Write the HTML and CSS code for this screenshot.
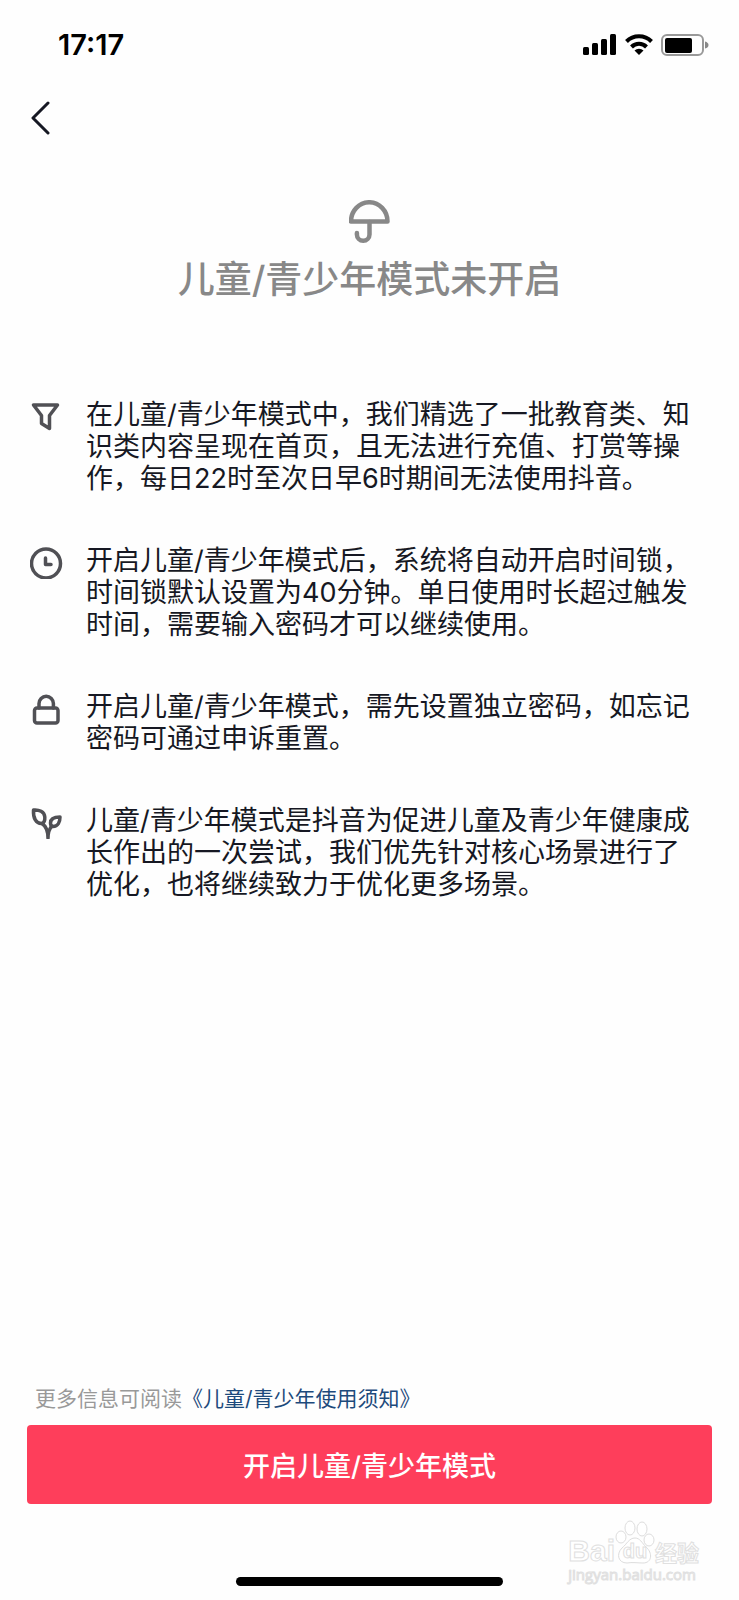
FILE: index.html
```
<!DOCTYPE html>
<html lang="zh-CN">
<head>
  <meta charset="UTF-8">
  <meta name="viewport" content="width=device-width, initial-scale=1.0">
  <title>儿童/青少年模式</title>
  <link rel="stylesheet" href="styles.css">
</head>
<body>
  <div class="screen">
    <div class="status-bar">
      <span class="time">17:17</span>
      <div class="status-icons">
        <svg width="34" height="22" viewBox="0 0 34 22">
          <rect x="0" y="13" width="6" height="8" rx="1.5"/>
          <rect x="9" y="9" width="6" height="12" rx="1.5"/>
          <rect x="18" y="5" width="6" height="16" rx="1.5"/>
          <rect x="27" y="0" width="6" height="21" rx="1.5"/>
        </svg>
        <svg width="28" height="22" viewBox="0 0 28 22">
          <path d="M1.5 7.5a17.500 17.500 0 0 1 25 0" fill="none" stroke="#000" stroke-width="4"/>
          <path d="M6.500 13a10.500 10.500 0 0 1 15 0" fill="none" stroke="#000" stroke-width="4"/>
          <path d="M14 21l-4.500-4.500a6.500 6.500 0 0 1 9 0z"/>
        </svg>
        <svg width="48" height="22" viewBox="0 0 48 22">
          <rect x="1" y="1" width="41" height="20" rx="5" fill="none" stroke="#999" stroke-width="2"/>
          <rect x="4" y="4" width="27" height="15" rx="2"/>
          <path d="M44 7.500q3.500 1 3.500 3.500t-3.500 3.500z" fill="#888"/>
        </svg>
      </div>
    </div>

    <button class="back" aria-label="返回">
      <svg width="20" height="34" viewBox="0 0 20 34">
        <path d="M18 2L3 17l15 15" fill="none" stroke="#161823" stroke-width="3" stroke-linecap="round" stroke-linejoin="round"/>
      </svg>
    </button>

    <div class="hero">
      <svg width="42" height="44" viewBox="0 0 42 44" fill="none" stroke="#888" stroke-width="4.500" stroke-linecap="round" stroke-linejoin="round">
        <path d="M2 21.500a18 19 0 0 1 36.500 0z"/>
        <path d="M20.500 22v12.500a6.300 6.300 0 0 1-12.600 0v-1.500"/>
      </svg>
      <h1>儿童/青少年模式未开启</h1>
    </div>

    <ul class="features">
      <li>
        <svg width="34" height="34" viewBox="0 0 34 34">
          <path d="M3.500 6h24l-8 10.500v13l-8-5v-8z"/>
        </svg>
        <p>在儿童/青少年模式中，我们精选了一批教育类、知识类内容呈现在首页，且无法进行充值、打赏等操作，每日22时至次日早6时期间无法使用抖音。</p>
      </li>
      <li>
        <svg width="34" height="34" viewBox="0 0 34 34">
          <circle cx="16" cy="18.500" r="14.500"/>
          <path d="M15.500 13v6.500h5.500"/>
        </svg>
        <p>开启儿童/青少年模式后，系统将自动开启时间锁，时间锁默认设置为40分钟。单日使用时长超过触发时间，需要输入密码才可以继续使用。</p>
      </li>
      <li>
        <svg width="34" height="34" viewBox="0 0 34 34">
          <rect x="4.500" y="17" width="23.500" height="15" rx="2.500"/>
          <path d="M9 17v-4.500a7.200 7.200 0 0 1 14.400 0v4.500"/>
        </svg>
        <p>开启儿童/青少年模式，需先设置独立密码，如忘记密码可通过申诉重置。</p>
      </li>
      <li>
        <svg width="34" height="34" viewBox="0 0 34 34">
          <path d="M3.500 5C9 4.500 14.500 6.500 14.800 12c.2 3-.8 5.800-2.800 6.500C6 19 3 13 3.500 5z"/>
          <path d="M30 12c-5.500 0-9.500 2-9.500 6 0 2 1 3.500 2.500 3.500 5 0 7-4.500 7-9.500z"/>
          <path d="M12 18.500c3 2 6 6 6 14.500 0-6 1-9 4-12"/>
        </svg>
        <p>儿童/青少年模式是抖音为促进儿童及青少年健康成长作出的一次尝试，我们优先针对核心场景进行了优化，也将继续致力于优化更多场景。</p>
      </li>
    </ul>

    <div class="footer">
      <p class="notice">更多信息可阅读<a href="#">《儿童/青少年使用须知》</a></p>
      <button class="enable">开启儿童/青少年模式</button>
    </div>

    <div class="home-indicator"></div>

    <div class="watermark">
      <div class="wm-logo">
        <span>Bai</span>
        <span class="paw">
          <svg width="40" height="44" viewBox="0 0 40 44" fill="#fff" stroke="#ddd">
            <ellipse cx="6" cy="17" rx="5" ry="6"/>
            <ellipse cx="15" cy="8" rx="5" ry="7"/>
            <ellipse cx="27" cy="9" rx="5" ry="7"/>
            <ellipse cx="34" cy="20" rx="5" ry="6"/>
            <path d="M20 18c5 0 7 5 11 9 7 6 6 16-3 16-5 0-11-1-16 0-9 0-11-9-5-15 5-4 7-10 13-10z"/>
          </svg>
          <span class="du">du</span>
        </span>
        <span class="cn">经验</span>
      </div>
      <div class="wm-url">jingyan.baidu.com</div>
    </div>
  </div>
</body>
</html>
```
FILE: styles.css
```
* {
  box-sizing: border-box;
}
body {
  margin: 0;
  background: #fefefe;
  color: #161823;
  font-family: Inter, "Noto Sans CJK SC", sans-serif;
}
h1, p, ul {
  margin: 0;
  padding: 0;
}
button {
  border: 0;
  font-family: inherit;
  cursor: pointer;
}
svg {
  display: block;
  flex-shrink: 0;
}
.screen {
  position: relative;
  display: flex;
  flex-direction: column;
  min-height: 100vh;
}
.status-bar {
  display: flex;
  justify-content: space-between;
  align-items: center;
  height: 89px;
  padding: 0 30px 0 58px;
}
.time {
  color: #000;
  font-size: 29px;
  font-weight: 600;
}
.status-icons {
  display: flex;
  gap: 8px;
}
.back {
  align-self: flex-start;
  margin-top: 12px;
  padding: 0 30px;
  background: none;
}
.hero {
  display: flex;
  flex-direction: column;
  align-items: center;
  margin-top: 65px;
}
.hero h1 {
  margin-top: 8px;
  color: #888;
  font-size: 37px;
  font-weight: 500;
  line-height: 56px;
}
.features {
  display: flex;
  flex-direction: column;
  gap: 50px;
  margin-top: 91px;
  padding: 0 39px 0 30px;
  list-style: none;
}
.features li {
  display: flex;
  gap: 22px;
}
.features svg {
  fill: none;
  stroke: #505055;
  stroke-width: 3.5;
  stroke-linecap: round;
  stroke-linejoin: round;
}
.features p {
  font-size: 27px;
  line-height: 32px;
}
.footer {
  margin-top: auto;
  padding: 0 27px;
}
.notice {
  padding: 0 8px;
  color: #999;
  font-size: 21px;
  line-height: 32px;
}
.notice a {
  color: #1d4a7c;
  text-decoration: none;
}
.enable {
  width: 100%;
  height: 79px;
  margin-top: 10px;
  border-radius: 4px;
  background: #fe3e5b;
  color: #fff;
  font-size: 27px;
  font-weight: 500;
}
.home-indicator {
  width: 36%;
  height: 9px;
  margin: 73px auto 14px;
  border-radius: 5px;
  background: #000;
}
.watermark {
  position: absolute;
  right: 40px;
  bottom: 16px;
  color: #fff;
  -webkit-text-stroke: 1px #e0e0e0;
}
.wm-logo {
  display: flex;
  align-items: flex-end;
  font-family: "Liberation Sans", sans-serif;
  font-size: 30px;
  font-weight: 700;
  line-height: 26px;
}
.paw {
  display: grid;
  place-items: end center;
}
.paw > * {
  grid-area: 1 / 1;
}
.du {
  font-size: 20px;
}
.cn {
  font-family: "Noto Sans CJK SC", sans-serif;
  font-size: 22px;
}
.wm-url {
  font-family: "Open Sans", sans-serif;
  font-size: 15px;
  line-height: 20px;
}
```
